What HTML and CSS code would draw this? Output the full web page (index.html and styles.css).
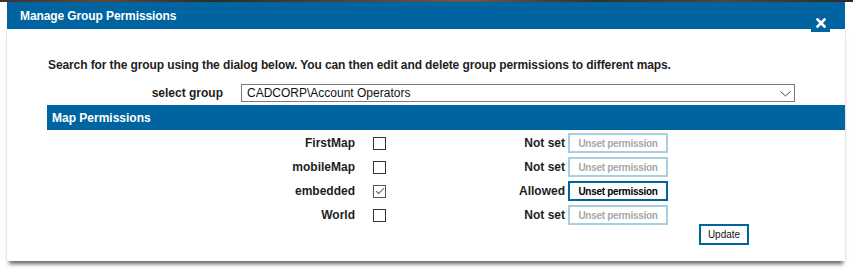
FILE: index.html
```html
<!DOCTYPE html>
<html lang="en">
<head>
    <meta charset="UTF-8">
    <meta name="viewport" content="width=device-width, initial-scale=1.0">
    <title>Manage Group Permissions</title>
    <link rel="stylesheet" href="styles.css">
</head>
<body>
    <div class="backdrop"></div>
    <div class="dialog">
        <div class="titlebar">
            <span class="title">Manage Group Permissions</span>
            <button class="close" title="Close">
                <svg width="10" height="10" viewBox="0 0 10 10">
                    <path d="M1.5 1.5 L8.5 8.5 M8.5 1.5 L1.5 8.5" stroke="#fff" stroke-width="2.6" stroke-linecap="square"/>
                </svg>
            </button>
        </div>
        <div class="content">
            <p class="intro">Search for the group using the dialog below. You can then edit and delete group permissions to different maps.</p>
            <div class="group-row">
                <label class="group-label" for="group">select group</label>
                <div class="select-wrap">
                    <select id="group" class="group-select">
                        <option>CADCORP\Account Operators</option>
                    </select>
                    <svg class="chevron" width="11" height="6" viewBox="0 0 11 6">
                        <path d="M0.5 0.5 L5.5 5 L10.5 0.5" fill="none" stroke="#444" stroke-width="1"/>
                    </svg>
                </div>
            </div>
            <div class="section-head">Map Permissions</div>
            <div class="perm-grid">
                <span class="map-name">FirstMap</span>
                <input type="checkbox" class="perm-check">
                <span class="status">Not set</span>
                <button class="unset" disabled>Unset permission</button>

                <span class="map-name">mobileMap</span>
                <input type="checkbox" class="perm-check">
                <span class="status">Not set</span>
                <button class="unset" disabled>Unset permission</button>

                <span class="map-name">embedded</span>
                <input type="checkbox" class="perm-check" checked>
                <span class="status">Allowed</span>
                <button class="unset">Unset permission</button>

                <span class="map-name">World</span>
                <input type="checkbox" class="perm-check">
                <span class="status">Not set</span>
                <button class="unset" disabled>Unset permission</button>
            </div>
            <div class="actions">
                <button class="update">Update</button>
            </div>
        </div>
    </div>
</body>
</html>
```

FILE: styles.css
```css
*{
   margin: 0;
   padding: 0;
   box-sizing: border-box;
}

body{
   font-family: "Liberation Sans", Arial, sans-serif;
   font-size: 12px;
   color: #1e1e1e;
   background-color: #fff;
   width: 853px;
   height: 276px;
   overflow: hidden;
}

.backdrop{
   height: 2px;
   background: linear-gradient(90deg, #3b352e, #5b4a39 12%, #2e2b28 25%, #4d4338 40%, #6a5a44 55%, #34302b 70%, #4f463a 85%, #2c2926);
}

.dialog{
   width: 838px;
   margin-left: 7px;
}

.titlebar{
   position: relative;
   height: 27px;
   padding-left: 13px;
   background-color: #0064a1;
   display: flex;
   align-items: center;
}

.title{
   color: #fff;
   font-size: 12px;
   font-weight: bold;
   letter-spacing: -0.1px;
}

.close{
   position: absolute;
   z-index: 2;
   top: 12px;
   right: 15px;
   width: 19px;
   height: 18px;
   border: none;
   background-color: #0064a1;
   display: flex;
   align-items: center;
   justify-content: center;
   cursor: pointer;
}

.content{
   background-color: #fff;
   padding: 29px 0 16px 40px;
   box-shadow: -1px 0 0 #e6e6e6, 1px 0 0 #e6e6e6, 0 5px 4px -2px rgba(0, 0, 0, 0.6);
}

.intro{
   font-weight: bold;
   line-height: 14px;
   padding-left: 1px;
   letter-spacing: -0.1px;
}

.group-row{
   display: flex;
   align-items: center;
   margin-top: 12px;
}

.group-label{
   width: 176px;
   text-align: right;
   font-weight: bold;
}

.select-wrap{
   position: relative;
   margin-left: 18px;
   width: 554px;
}

.group-select{
   appearance: none;
   -webkit-appearance: none;
   display: block;
   width: 100%;
   height: 18px;
   padding: 0 20px 0 5px;
   border: 1px solid #7a7a7a;
   border-radius: 0;
   background-color: #fff;
   font-family: inherit;
   font-size: 12px;
   color: #111;
   outline: none;
}

.chevron{
   position: absolute;
   top: 7px;
   right: 4px;
   pointer-events: none;
}

.section-head{
   margin-top: 3px;
   height: 25px;
   padding-left: 5px;
   background-color: #0064a1;
   color: #fff;
   font-weight: bold;
   display: flex;
   align-items: center;
}

.perm-grid{
   display: grid;
   grid-template-columns: 308px 31px 179px 103px;
   grid-auto-rows: 24px;
   align-items: center;
   padding-top: 1px;
}

.map-name{
   text-align: right;
   font-weight: bold;
}

.perm-check{
   appearance: none;
   -webkit-appearance: none;
   justify-self: end;
   position: relative;
   width: 13px;
   height: 13px;
   border: 1px solid #333;
   background-color: #fff;
   margin: 0;
}

.perm-check:checked{
   border-color: #555;
}

.perm-check:checked::after{
   content: "";
   position: absolute;
   left: 2px;
   top: 2px;
   width: 7px;
   height: 3px;
   border-left: 1.5px solid #555;
   border-bottom: 1.5px solid #555;
   transform: rotate(-45deg);
}

.status{
   text-align: right;
   font-weight: bold;
}

.unset{
   justify-self: end;
   width: 100px;
   height: 20px;
   border: 2px solid #0064a1;
   background-color: #fff;
   color: #000;
   font-family: inherit;
   font-size: 10px;
   font-weight: bold;
   letter-spacing: -0.3px;
   cursor: pointer;
}

.unset:disabled{
   border-color: #a9cde3;
   color: #a8a8a8;
   cursor: default;
}

.actions{
   margin-top: -3px;
   padding-left: 652px;
}

.update{
   width: 50px;
   height: 21px;
   border: 2px solid #0064a1;
   background-color: #fff;
   color: #111;
   font-family: inherit;
   font-size: 10px;
   cursor: pointer;
}
```
